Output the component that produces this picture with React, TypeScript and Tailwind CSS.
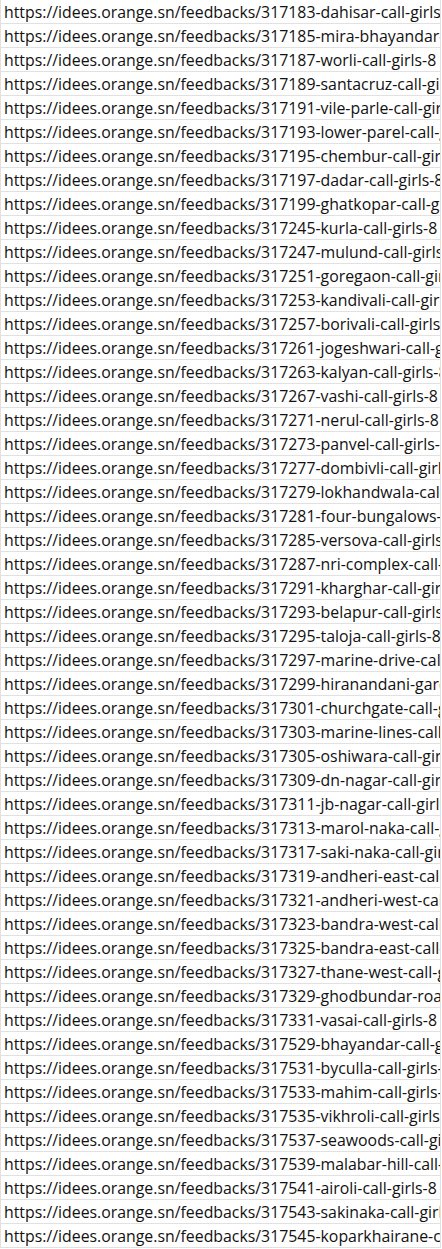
const rows: string[] = [
    "317183-dahisar-call-girls-8",
    "317185-mira-bhayandar-call",
    "317187-worli-call-girls-8",
    "317189-santacruz-call-girls",
    "317191-vile-parle-call-girls",
    "317193-lower-parel-call-girls",
    "317195-chembur-call-girls",
    "317197-dadar-call-girls-8",
    "317199-ghatkopar-call-girls",
    "317245-kurla-call-girls-8",
    "317247-mulund-call-girls-8",
    "317251-goregaon-call-girls",
    "317253-kandivali-call-girls",
    "317257-borivali-call-girls-8",
    "317261-jogeshwari-call-girls",
    "317263-kalyan-call-girls-8",
    "317267-vashi-call-girls-8",
    "317271-nerul-call-girls-8",
    "317273-panvel-call-girls-8",
    "317277-dombivli-call-girls",
    "317279-lokhandwala-call-girls",
    "317281-four-bungalows-call",
    "317285-versova-call-girls-8",
    "317287-nri-complex-call-girls",
    "317291-kharghar-call-girls",
    "317293-belapur-call-girls-8",
    "317295-taloja-call-girls-8",
    "317297-marine-drive-call-girls",
    "317299-hiranandani-gardens",
    "317301-churchgate-call-girls",
    "317303-marine-lines-call-girls",
    "317305-oshiwara-call-girls",
    "317309-dn-nagar-call-girls",
    "317311-jb-nagar-call-girls-8",
    "317313-marol-naka-call-girls",
    "317317-saki-naka-call-girls",
    "317319-andheri-east-call-girls",
    "317321-andheri-west-call-girls",
    "317323-bandra-west-call-girls",
    "317325-bandra-east-call-girls",
    "317327-thane-west-call-girls",
    "317329-ghodbundar-road-call",
    "317331-vasai-call-girls-8",
    "317529-bhayandar-call-girls",
    "317531-byculla-call-girls-8",
    "317533-mahim-call-girls-8",
    "317535-vikhroli-call-girls-8",
    "317537-seawoods-call-girls",
    "317539-malabar-hill-call-girls",
    "317541-airoli-call-girls-8",
    "317543-sakinaka-call-girls",
    "317545-koparkhairane-call",
];

const App = () => {
    return (
        <div className="w-[442px] bg-white overflow-hidden">
            <div className="w-[441px] border-l border-[#e1e1e1]">
                {rows.map((slug) => (
                    <div key={slug}
                         className="h-6 border-b border-r border-[#e1e1e1] flex items-end pl-[3px] overflow-hidden whitespace-nowrap text-[15.85px] leading-[22px] text-[#111]"
                         style={{fontFamily: '"Open Sans", sans-serif'}}>
                        https://idees.orange.sn/feedbacks/{slug}
                    </div>
                ))}
            </div>
        </div>
    );
}

export default App;
